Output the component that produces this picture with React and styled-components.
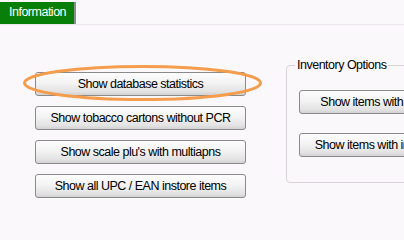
import React from 'react';
import styled, { createGlobalStyle } from 'styled-components';

const GlobalStyle = createGlobalStyle`
  html, body {
    margin: 0;
    padding: 0;
    width: 404px;
    height: 226px;
    overflow: hidden;
    background: #fbf8fb;
  }
`;

const Page = styled.div`
  width: 404px;
  height: 226px;
  overflow: hidden;
  background: #fbf8fb;
  font-family: "Liberation Sans", Arial, sans-serif;
  font-size: 12.5px;
  letter-spacing: -0.5px;
  color: #000;
`;

const TabStrip = styled.div`
  display: flex;
  padding-top: 2px;
  border-bottom: 1px solid #ebe6eb;
`;

const Tab = styled.div`
  background: #087f08;
  color: #fff;
  height: 22px;
  line-height: 21px;
  padding: 0 8px 0 9px;
  border-right: 2px solid #8d8d8d;
  font-size: 12.5px;
`;

const Content = styled.div`
  display: flex;
  align-items: flex-start;
  padding-left: 35px;
  gap: 40px;
`;

const ButtonColumn = styled.div`
  display: flex;
  flex-direction: column;
  gap: 10px;
  padding-top: 47px;
`;

const ButtonSlot = styled.div`
  position: relative;
`;

const Button = styled.button`
  width: 211px;
  height: 24px;
  padding: 0;
  border: 1px solid #8a8a8a;
  border-radius: 3px;
  background: linear-gradient(#fdfdfd, #f3f3f3 45%, #e2e2e2 85%, #d2d2d2);
  font-family: inherit;
  font-size: 12.5px;
  letter-spacing: inherit;
  color: #000;
  white-space: nowrap;
  overflow: hidden;
  text-align: center;
`;

const Highlight = styled.svg`
  position: absolute;
  left: -12px;
  top: -7px;
  width: 239px;
  height: 36px;
  pointer-events: none;
  overflow: visible;
`;

const GroupBox = styled.fieldset`
  margin: 33px 0 0 0;
  padding: 17px 12px 25px 12px;
  width: 260px;
  flex-shrink: 0;
  border: 1px solid #d8d3d8;
  border-radius: 4px;
  display: flex;
  flex-direction: column;
  gap: 19px;
`;

const Legend = styled.legend`
  margin-left: -4px;
  padding: 0 2px;
  font-size: 12.5px;
  line-height: 15px;
`;

const leftButtons = [
  'Show tobacco cartons without PCR',
  "Show scale plu's with multiapns",
  'Show all UPC / EAN instore items',
];

const inventoryButtons = [
  'Show items with no cost price set',
  'Show items with invalid UPC codes',
];

export default function App() {
  return (
    <Page>
      <GlobalStyle />
      <TabStrip>
        <Tab>Information</Tab>
      </TabStrip>
      <Content>
        <ButtonColumn>
          <ButtonSlot>
            <Button>Show database statistics</Button>
            <Highlight viewBox="0 0 239 36">
              <ellipse
                cx="119.5"
                cy="18"
                rx="118"
                ry="16.5"
                fill="none"
                stroke="#f59d4c"
                strokeWidth="3"
              />
            </Highlight>
          </ButtonSlot>
          {leftButtons.map((label) => (
            <ButtonSlot key={label}>
              <Button>{label}</Button>
            </ButtonSlot>
          ))}
        </ButtonColumn>
        <GroupBox>
          <Legend>Inventory Options</Legend>
          {inventoryButtons.map((label) => (
            <Button key={label}>{label}</Button>
          ))}
        </GroupBox>
      </Content>
    </Page>
  );
}
